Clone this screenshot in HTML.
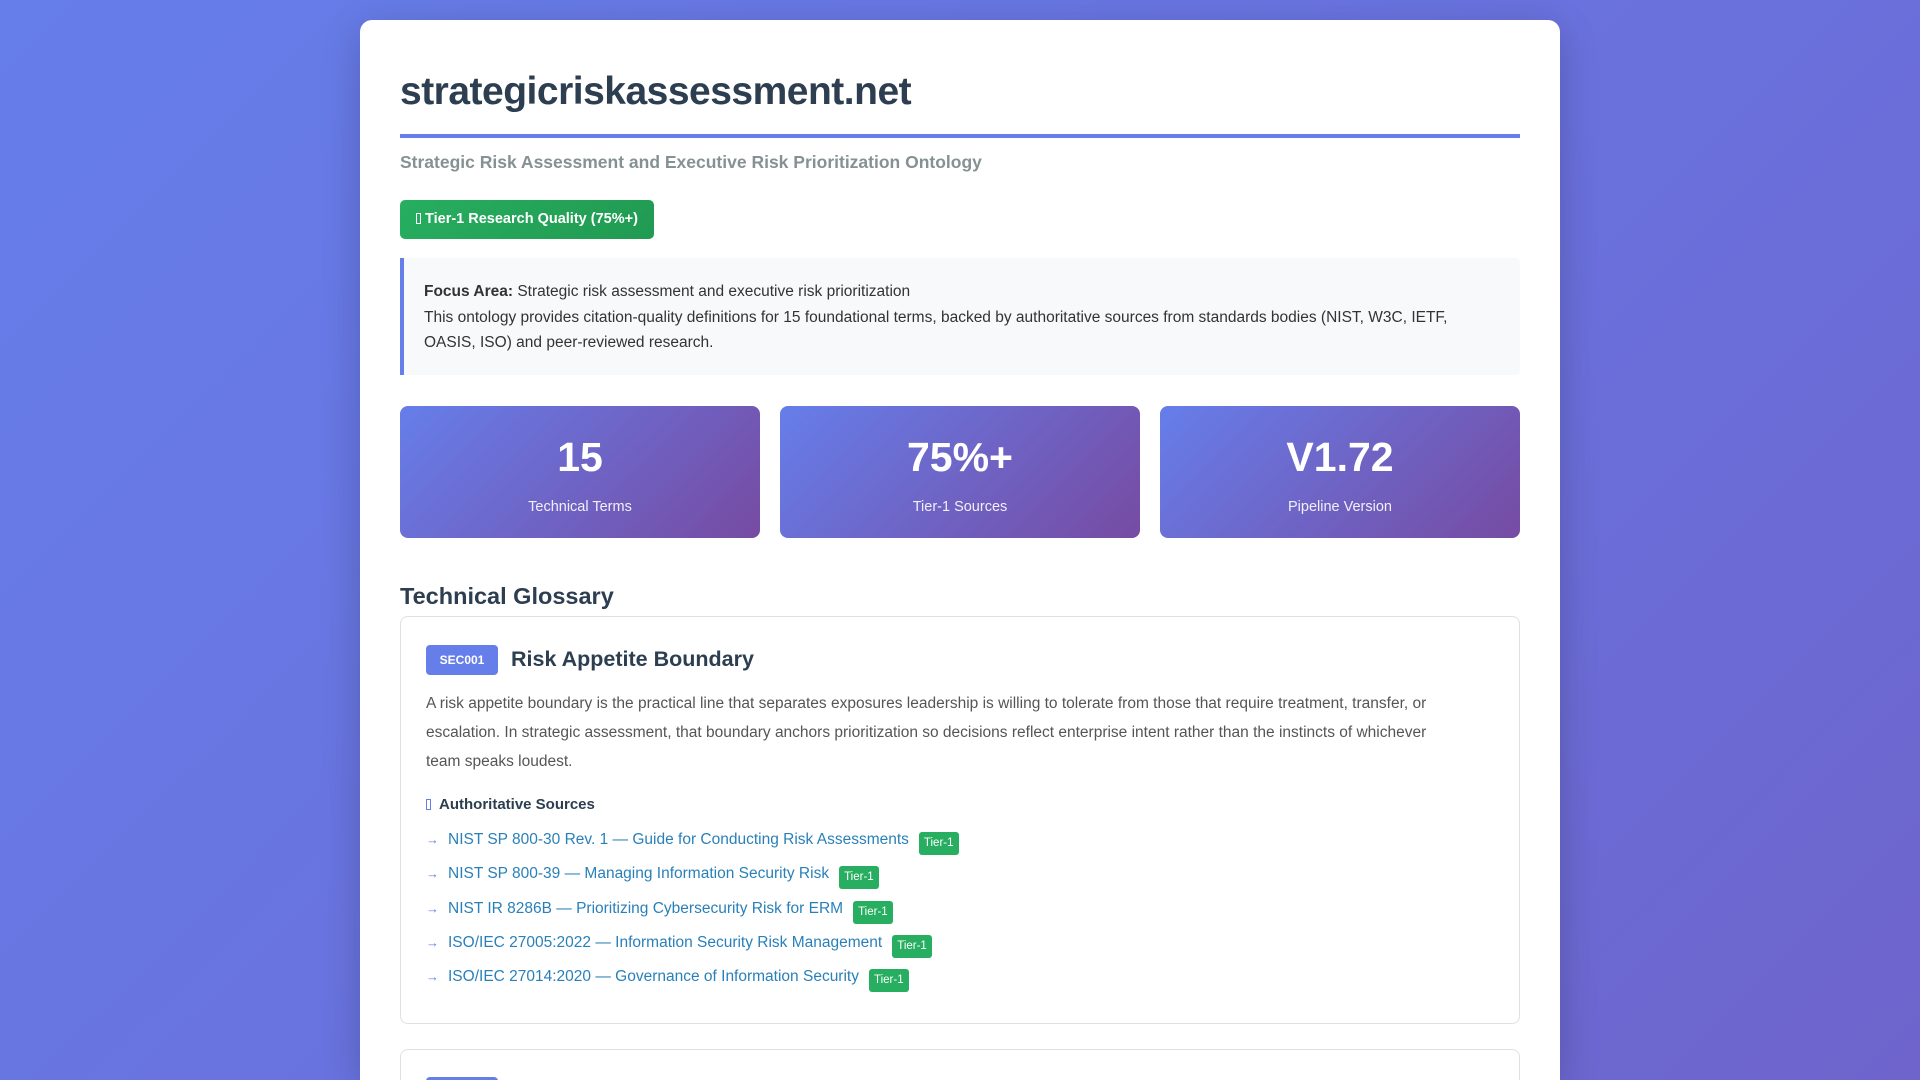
<!DOCTYPE html>
<html><head><meta charset="utf-8"><style>
*{box-sizing:border-box;margin:0;padding:0}
html,body{width:1920px;height:1080px;overflow:hidden}
body{font-family:"Liberation Sans",sans-serif;background:linear-gradient(135deg,#667eea 0%,#6a70dc 60%,#6e64cc 100%);position:relative}
.card{position:absolute;left:360px;top:20px;width:1200px;height:1060px;background:#fff;border-radius:12px 12px 0 0;box-shadow:0 10px 40px rgba(0,0,0,.2);padding:0 40px;overflow:hidden}
h1{position:absolute;left:40px;top:49px;font-size:39px;font-weight:bold;color:#2c3e50;letter-spacing:-0.5px;line-height:46px}
.rule{position:absolute;left:40px;right:40px;top:114px;height:4px;background:#667eea}
.sub{position:absolute;left:40px;top:132px;font-size:17.5px;color:#7f8c8d;font-weight:bold;opacity:.95}
.badge{position:absolute;left:40px;top:180px;width:254px;height:39px;border-radius:5px;background:linear-gradient(135deg,#27ae60,#219a52);color:#fff;font-weight:bold;font-size:14.5px;line-height:39px;padding-left:16px}
.tofu{display:inline-block;width:5px;height:11px;border:1px solid currentColor;vertical-align:-1px;margin-right:4px}
.focus{position:absolute;left:40px;right:40px;top:238px;height:117px;background:#f8f9fa;border-left:4px solid #667eea;border-radius:0 4px 4px 0;padding:21px 20px 0 20px;font-size:15.5px;line-height:25.5px;color:#333}
.stats{position:absolute;left:40px;right:40px;top:386px;height:132px;display:flex;gap:20px}
.stat{flex:1;border-radius:8px;background:linear-gradient(135deg,#667eea,#764ba2);color:#fff;text-align:center}
.stat .n{font-size:41px;font-weight:bold;margin-top:28px;line-height:46px}
.stat .l{font-size:14.5px;margin-top:19px;opacity:.9}
h2{position:absolute;left:40px;top:563px;font-size:23.5px;color:#2c3e50;font-weight:bold}
.term{position:absolute;left:40px;right:40px;top:596px;height:408px;border:1px solid #e0e0e0;border-radius:8px;padding:0 25px}
.term2{top:1029px;height:60px}
.tid{position:absolute;left:25px;top:28px;width:72px;height:30px;background:#667eea;color:#fff;border-radius:4px;font-size:12px;font-weight:bold;text-align:center;line-height:30px}
.tt{position:absolute;left:110px;top:30px;font-size:21.5px;font-weight:bold;color:#2c3e50}
.desc{position:absolute;left:25px;right:75px;top:72px;font-size:15.5px;line-height:29px;color:#555}
.src{position:absolute;left:25px;top:179px;font-size:15px;font-weight:bold;color:#2c3e50}
.src .tofu{color:#667eea;margin-right:8px}
ul{position:absolute;left:25px;top:206px;list-style:none}
li{height:34.3px;font-size:15.5px;color:#2980b9;line-height:34px;white-space:nowrap}
li .a{color:#667eea;font-size:13px;margin-right:9px}
.t1{display:inline-block;background:#27ae60;color:#fff;font-size:11.5px;padding:0 5px;height:23px;line-height:23px;border-radius:3px;margin-left:10px;vertical-align:-2px}
</style></head><body>
<div class="card">
<h1>strategicriskassessment.net</h1>
<div class="rule"></div>
<div class="sub">Strategic Risk Assessment and Executive Risk Prioritization Ontology</div>
<div class="badge"><span class="tofu"></span>Tier-1 Research Quality (75%+)</div>
<div class="focus"><b>Focus Area:</b> Strategic risk assessment and executive risk prioritization<br>This ontology provides citation-quality definitions for 15 foundational terms, backed by authoritative sources from standards bodies (NIST, W3C, IETF, OASIS, ISO) and peer-reviewed research.</div>
<div class="stats">
<div class="stat"><div class="n">15</div><div class="l">Technical Terms</div></div>
<div class="stat"><div class="n">75%+</div><div class="l">Tier-1 Sources</div></div>
<div class="stat"><div class="n">V1.72</div><div class="l">Pipeline Version</div></div>
</div>
<h2>Technical Glossary</h2>
<div class="term">
<div class="tid">SEC001</div>
<div class="tt">Risk Appetite Boundary</div>
<div class="desc">A risk appetite boundary is the practical line that separates exposures leadership is willing to tolerate from those that require treatment, transfer, or escalation. In strategic assessment, that boundary anchors prioritization so decisions reflect enterprise intent rather than the instincts of whichever team speaks loudest.</div>
<div class="src"><span class="tofu"></span>Authoritative Sources</div>
<ul>
<li><span class="a">→</span>NIST SP 800-30 Rev. 1 — Guide for Conducting Risk Assessments<span class="t1">Tier-1</span></li>
<li><span class="a">→</span>NIST SP 800-39 — Managing Information Security Risk<span class="t1">Tier-1</span></li>
<li><span class="a">→</span>NIST IR 8286B — Prioritizing Cybersecurity Risk for ERM<span class="t1">Tier-1</span></li>
<li><span class="a">→</span>ISO/IEC 27005:2022 — Information Security Risk Management<span class="t1">Tier-1</span></li>
<li><span class="a">→</span>ISO/IEC 27014:2020 — Governance of Information Security<span class="t1">Tier-1</span></li>
</ul>
</div>
<div class="term term2"><div class="tid" style="top:27px"></div></div>
</div>
</body></html>
